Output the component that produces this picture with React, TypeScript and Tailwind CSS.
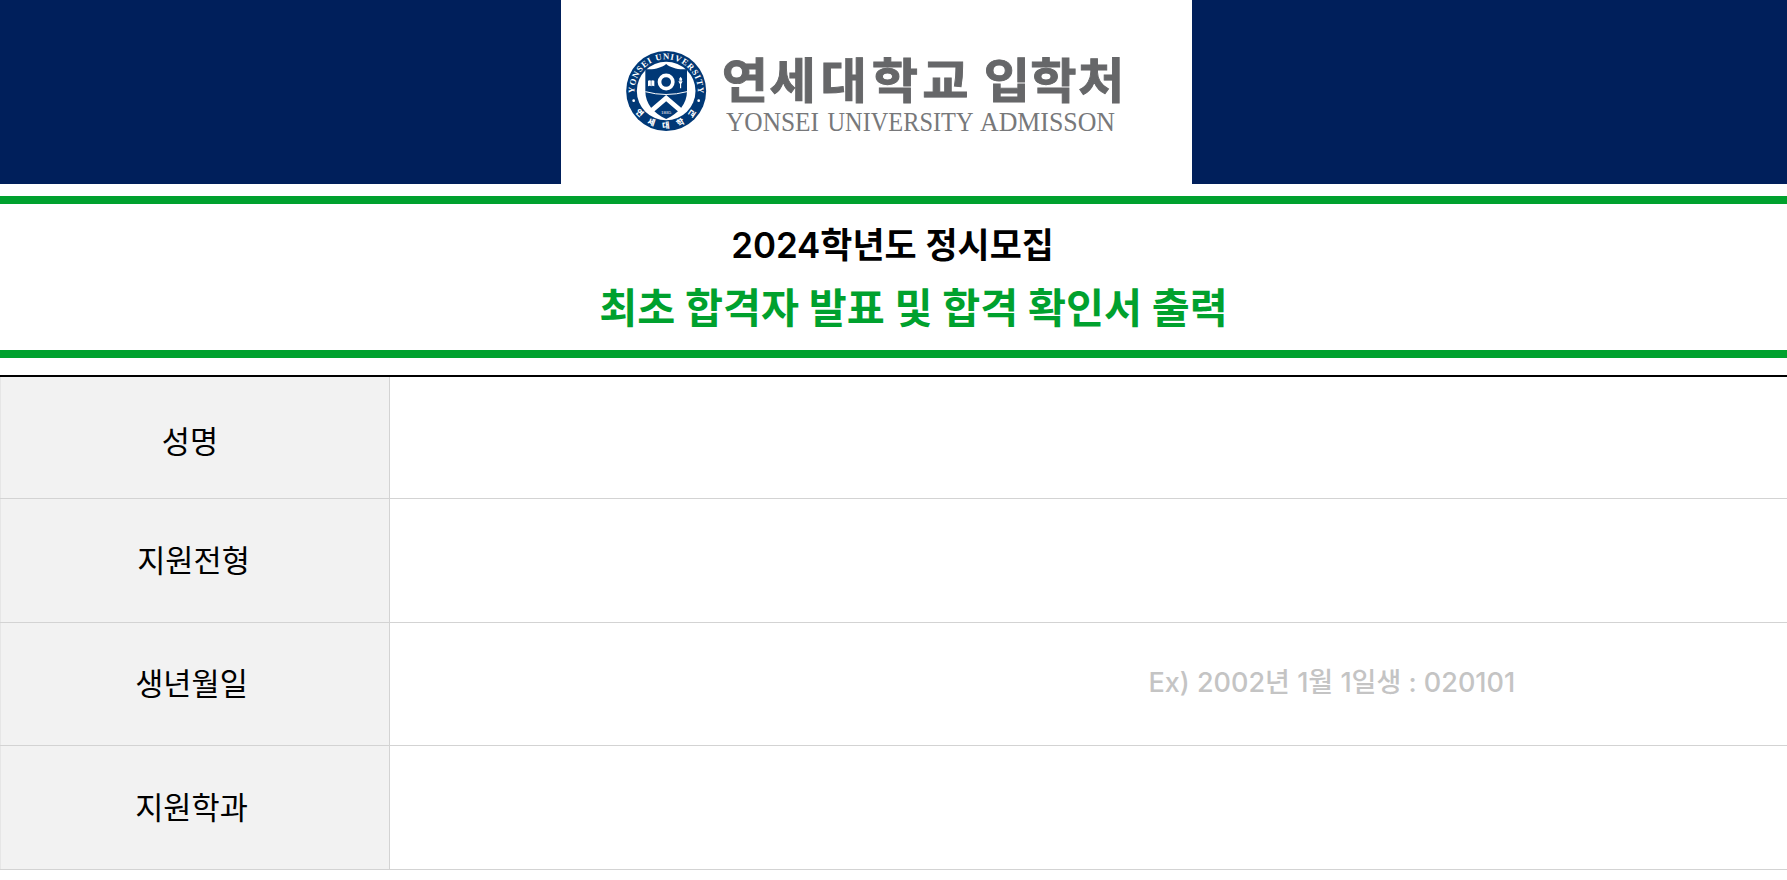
import React from "react";

const NAVY = "#003876";

function Seal() {
  return (
    <svg className="h-[100px] w-[100px] shrink-0" viewBox="0 0 300 300" aria-label="연세대학교">
      <defs>
        <path id="seal-top" d="M58.500 158 V153 A95 95 0 0 1 248.500 153 V158" />
        <path id="seal-bottom" d="M42.500 153 A111 111 0 0 0 264.500 153" />
      </defs>
      <circle cx="153.500" cy="153" r="120" fill={NAVY} />
      <circle cx="153.500" cy="153" r="88" fill="#fff" />
      <text fill="#fff" fontSize="26" fontWeight="700" letterSpacing="2.6" fontFamily="'Liberation Serif', serif">
        <textPath href="#seal-top" startOffset="50.4%" textAnchor="middle">YONSEI UNIVERSITY</textPath>
      </text>
      <text fill="#fff" fontSize="24" fontWeight="900" letterSpacing="26" fontFamily="'Noto Sans CJK KR', sans-serif">
        <textPath href="#seal-bottom" startOffset="187" textAnchor="middle">연세대학교</textPath>
      </text>
      <circle cx="56" cy="182" r="4" fill="#fff" />
      <circle cx="251" cy="182" r="4" fill="#fff" />
      <path d="M153.500 72 C140 84 115 90 91 87 V153 C91 192 116 220 153.500 237 C191 220 216 192 216 153 V87 C192 90 167 84 153.500 72 Z" fill={NAVY} />
      <path d="M91 155 Q153 172 216 155" fill="none" stroke="#fff" strokeWidth="3" />
      <path d="M153.500 165 L107 205 L116 216 L153.500 184 L191 216 L200 205 Z" fill="#fff" />
      <circle cx="153.500" cy="126" r="20" fill="none" stroke="#fff" strokeWidth="11" />
      <path d="M99 122 Q104 119 108.500 122 Q113 119 118 122 V139 Q113 136 108.500 139 Q104 136 99 139 Z" fill="#fff" />
      <path d="M108.500 122 V139" stroke={NAVY} strokeWidth="1.500" />
      <path d="M190 124 H203 L199 131 H194 Z M193 122 Q191 115 197 110 Q203 116 201 122 Z M195 131 H198.500 V145 H195 Z" fill="#fff" />
      <text x="153.500" y="221" textAnchor="middle" fill="#fff" fontSize="15" fontFamily="'Liberation Serif', serif" textLength="31">1885</text>
    </svg>
  );
}

function Wordmark() {
  return (
    <svg className="h-[100px] w-[420px] shrink-0" viewBox="715 40 420 100">
      <g transform="scale(1.06 1)" fill="#666769" stroke="#666769" strokeWidth="0.9" fontSize="47.500" fontWeight="700" fontFamily="'Noto Sans CJK KR', sans-serif">
        <text y="97.600" x="681 726 774 822.500 870 928 972 1017">연세대학교입학처</text>
      </g>
      <g fill="#77787a" fontSize="26.500" fontFamily="'Liberation Serif', serif">
        <text x="726" y="130.500" textLength="93" lengthAdjust="spacingAndGlyphs">YONSEI</text>
        <text x="827.500" y="130.500" textLength="146" lengthAdjust="spacingAndGlyphs">UNIVERSITY</text>
        <text x="980" y="130.500" textLength="135" lengthAdjust="spacingAndGlyphs">ADMISSON</text>
      </g>
    </svg>
  );
}

function Header() {
  return (
    <header className="flex h-[183.500px] justify-center bg-[#001f5b] pr-[35px]">
      <div className="flex w-[631px] items-start bg-white pt-10 pl-[54.500px]">
        <Seal />
        <Wordmark />
      </div>
    </header>
  );
}

function Title() {
  return (
    <section className="mt-[12.500px] flex h-[162.400px] flex-col items-center border-y-[8px] border-[#00a12e] pt-[15px] whitespace-nowrap">
      <h1 className="flex h-[52px] items-center pr-[2px] text-[34.900px] font-semibold text-black">2024학년도 정시모집</h1>
      <h2 className="mt-[12px] flex h-[52px] items-center pl-[40px] text-[41.300px] font-bold text-[#00a12e]">
        최초 합격자 발표 및 합격 확인서 출력
      </h2>
    </section>
  );
}

function Row({ label, hint, className, labelClass }: { label: string; hint?: string; className: string; labelClass: string }) {
  return (
    <div className={"flex border-b border-[#d3d3d3] " + className}>
      <div className={"flex w-[390px] items-center justify-center border-x border-r-[#d3d3d3] border-l-[#e6e6e6] bg-[#f2f2f2] text-[30.600px] text-black " + labelClass}>
        {label}
      </div>
      <div className="flex flex-1 items-center pb-[2px] pl-[758.500px] text-[27px] font-medium whitespace-nowrap text-[#c4c4c4]">{hint}</div>
    </div>
  );
}

export default function App() {
  return (
    <main className="h-[880px] w-full overflow-hidden bg-white font-['Inter','Noto_Sans_CJK_KR',sans-serif]">
      <Header />
      <Title />
      <div className="mt-[16.600px] border-t-2 border-black">
        <Row label="성명" className="h-[122px]" labelClass="pt-[8px] pr-[10px]" />
        <Row label="지원전형" className="h-[124px]" labelClass="pt-[1px] pr-[3px]" />
        <Row label="생년월일" hint="Ex) 2002년 1월 1일생 : 020101" className="h-[123px]" labelClass="pr-[7px]" />
        <Row label="지원학과" className="h-[124px]" labelClass="pr-[7px]" />
      </div>
    </main>
  );
}
